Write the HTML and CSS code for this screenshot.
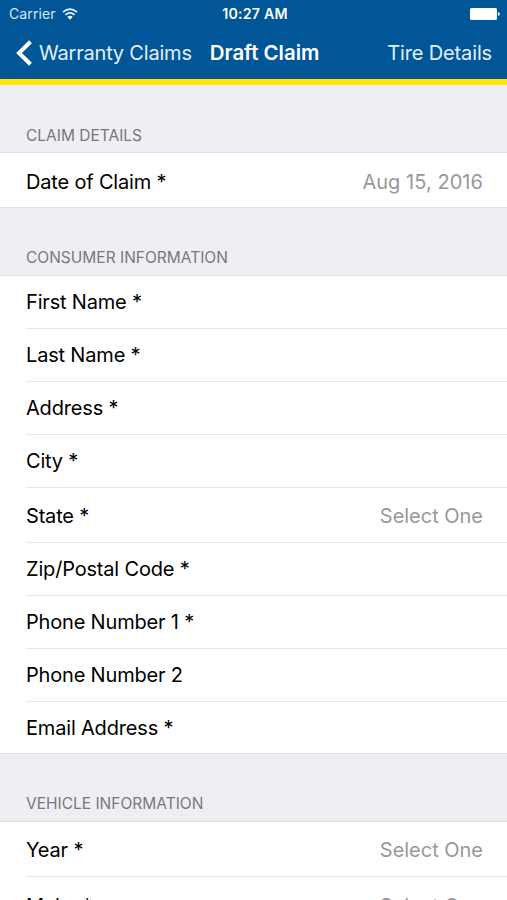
FILE: index.html
```html
<!DOCTYPE html>
<html lang="en">
<head>
<meta charset="utf-8">
<title>Draft Claim</title>
<link rel="stylesheet" href="styles.css">
</head>
<body>
<header class="header">
  <div class="status">
    <div class="carrier"><span class="carrier-name">Carrier</span>
      <svg class="wifi" viewBox="0 0 16 12"><path d="M1 4.2Q8-2 15 4.2M3.4 6.8Q8 2.8 12.6 6.8" fill="none" stroke="#e6f3fb" stroke-width="1.7"/><path d="M5.3 8.8Q8 6.6 10.7 8.8L8 11.7Z" fill="#fff"/></svg>
    </div>
    <span class="time">10:27 AM</span>
    <svg class="battery" viewBox="0 0 30 12"><rect width="27" height="12" rx="1.5" fill="#fff"/><path d="M28 4Q29.8 4.4 29.8 6T28 8Z" fill="#fff"/></svg>
  </div>
  <nav class="nav">
    <a class="back"><svg class="chevron" viewBox="0 0 17 28"><path d="M15.5 2.8L4 14L15.5 25.2" fill="none" stroke="#fff" stroke-width="4"/></svg><span class="back-label">Warranty Claims</span></a>
    <h1 class="title">Draft Claim</h1>
    <a class="next">Tire Details</a>
  </nav>
</header>
<main>
  <h2 class="heading first">CLAIM DETAILS</h2>
  <section class="group">
    <div class="row tall"><span class="label">Date of Claim *</span><span class="value date">Aug 15, 2016</span></div>
  </section>
  <h2 class="heading">CONSUMER INFORMATION</h2>
  <section class="group">
    <div class="row"><span class="label">First Name *</span></div>
    <div class="row"><span class="label">Last Name *</span></div>
    <div class="row"><span class="label">Address *</span></div>
    <div class="row"><span class="label">City *</span></div>
    <div class="row tall"><span class="label">State *</span><span class="value">Select One</span></div>
    <div class="row"><span class="label">Zip/Postal Code *</span></div>
    <div class="row"><span class="label">Phone Number 1 *</span></div>
    <div class="row"><span class="label">Phone Number 2</span></div>
    <div class="row"><span class="label">Email Address *</span></div>
  </section>
  <h2 class="heading">VEHICLE INFORMATION</h2>
  <section class="group">
    <div class="row tall"><span class="label">Year *</span><span class="value">Select One</span></div>
    <div class="row tall"><span class="label">Make *</span><span class="value">Select One</span></div>
  </section>
</main>
</body>
</html>
```

FILE: styles.css
```css
* { box-sizing: border-box; }
body { margin: 0; width: 507px; height: 900px; overflow: hidden; background: #efeef3; color: #000; font-family: Inter, "Liberation Sans", sans-serif; font-size: 20px; font-weight: 400; }
.header { height: 85px; background: #005696; border-bottom: 6px solid #ffe600; color: #fff; }
.status { height: 27px; display: grid; grid-template-columns: 1fr auto 1fr; align-items: center; padding: 0 7px 0 9px; font-size: 14px; }
.carrier { display: flex; align-items: center; gap: 6px; color: #d5e8f5; }
.carrier-name { letter-spacing: 0.1px; }
.wifi { width: 16px; height: 12px; }
.time { padding-left: 1px; font-weight: 600; font-size: 14.2px; letter-spacing: 0.2px; }
.battery { width: 30px; height: 12px; justify-self: end; }
.nav { height: 51px; display: flex; align-items: center; padding: 0 15px; white-space: nowrap; }
.back { display: flex; align-items: center; gap: 7px; color: #e2f0f9; }
.back-label { letter-spacing: -0.2px; }
.chevron { width: 17px; height: 28px; }
.title { margin: 0 0 0 18px; font-size: 20.4px; font-weight: 600; letter-spacing: 0; }
.next { margin-left: auto; color: #e2f0f9; letter-spacing: -0.15px; }
.heading { margin: 0; height: 67px; padding: 41px 26px 0; color: #78787d; font-size: 15.5px; line-height: 18px; font-weight: 400; }
.first { padding-top: 42px; }
.group { background: #fff; border-top: 1px solid #e0e0e4; border-bottom: 1px solid #e2e2e6; }
.row { height: 53px; margin-left: 26px; padding-right: 24px; display: flex; align-items: center; justify-content: space-between; border-bottom: 1px solid #e8e8ea; white-space: nowrap; }
.tall { height: 55px; padding-top: 2px; }
.row:last-child { height: 51px; border-bottom: 0; }
.tall:last-child { height: 54px; padding-top: 3px; }
.label { letter-spacing: -0.18px; }
.value { color: #98989a; letter-spacing: -0.02px; }
.date { letter-spacing: 0.05px; }
```
